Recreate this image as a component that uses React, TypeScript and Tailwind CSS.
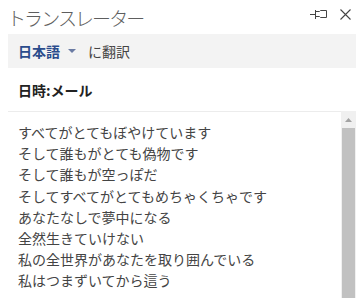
import React from "react";

const lines = [
  "すべてがとてもぼやけています",
  "そして誰もがとても偽物です",
  "そして誰もが空っぽだ",
  "そしてすべてがとてもめちゃくちゃです",
  "あなたなしで夢中になる",
  "全然生きていけない",
  "私の全世界があなたを取り囲んでいる",
  "私はつまずいてから這う",
];

function PinIcon() {
  return (
    <svg width="18" height="10" viewBox="0 0 18 10" fill="none" stroke="#444" strokeWidth="1">
      <path d="M0 5.5H5" />
      <path d="M5.5 1V10" />
      <path d="M6 2.5H9.5L10.5 1.5H16.5V8.5H10.5L9.5 7.5H6" />
    </svg>
  );
}

function CloseIcon() {
  return (
    <svg width="11" height="11" viewBox="0 0 11 11" stroke="#444" strokeWidth="1.1">
      <path d="M0.5 0.5L10.5 10.5M10.5 0.5L0.5 10.5" />
    </svg>
  );
}

export default function App() {
  return (
    <div
      className="w-[356px] h-[298px] bg-white overflow-hidden pl-2"
      style={{ fontFamily: '"Noto Sans CJK JP", "Noto Sans", sans-serif' }}
    >
      {/* HEADER */}
      <div className="h-[34px] flex items-center justify-between pr-[5px]">
        <span className="text-[19px] tracking-[-1.9px] font-light text-[#5e5e5e] leading-none -ml-[1px]">
          トランスレーター
        </span>
        <div className="flex items-center gap-[12px] -mt-[6px]">
          <PinIcon />
          <CloseIcon />
        </div>
      </div>

      {/* LANGUAGE BAR */}
      <div className="h-[34px] bg-[#f3f3f3] flex items-center pl-[10px] text-[14px] leading-none">
        <span className="font-semibold text-[#2b4c8c]">日本語</span>
        <svg width="8" height="4" viewBox="0 0 8 4" className="ml-[8px] mr-[12px]">
          <path d="M0 0H8L4 4Z" fill="#6a7ba3" />
        </svg>
        <span className="text-[#444]">に翻訳</span>
      </div>

      {/* LABEL */}
      <div className="h-[43px] flex items-center pl-[10px]">
        <span className="text-[14px] font-bold text-[#222] leading-none">日時:メール</span>
      </div>

      {/* TEXT AREA */}
      <div className="flex h-[187px]">
        <div className="flex-1 border-t border-[#ececec] pl-[10px] pt-[10px]">
          {lines.map((l) => (
            <div key={l} className="text-[14px] leading-[21.2px] text-[#444]">
              {l}
            </div>
          ))}
        </div>
        <div className="w-[15px] bg-[#f0f0f0] flex flex-col">
          <div className="h-[17px] flex items-center justify-center">
            <svg width="7" height="4" viewBox="0 0 7 4">
              <path d="M0 4H7L3.5 0Z" fill="#a3a3a3" />
            </svg>
          </div>
          <div className="flex-1 bg-[#c1c1c1] mx-[1px]" />
        </div>
      </div>
    </div>
  );
}
